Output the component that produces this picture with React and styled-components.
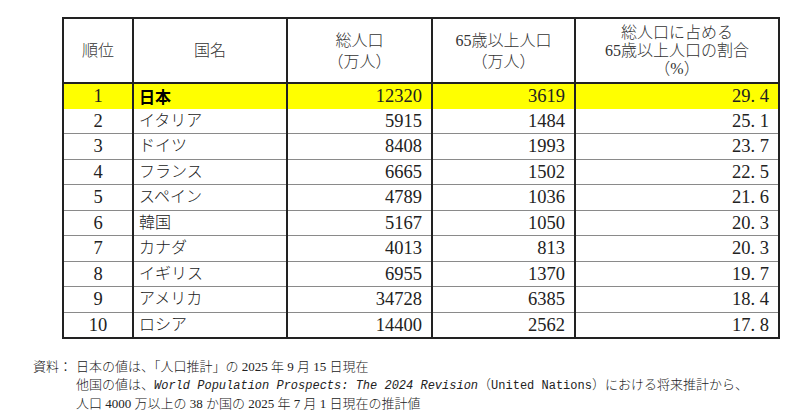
import styled, { createGlobalStyle } from 'styled-components';

const GlobalStyle = createGlobalStyle`
  html, body {
    margin: 0;
    padding: 0;
    background: #ffffff;
  }
  body {
    font-family: "Liberation Serif", "Noto Sans CJK JP", serif;
    color: #222;
  }
`;

const Page = styled.div`
  width: 800px;
  height: 420px;
  box-sizing: border-box;
  padding: 17px 0 0 62px;
  overflow: hidden;
`;

const Table = styled.table`
  border-collapse: collapse;
  table-layout: fixed;
  width: 716px;
  border: 2px solid #222;
`;

const HeadCell = styled.th`
  height: 63px;
  padding: 0;
  font-weight: 300;
  font-size: 16px;
  line-height: ${(p) => p.$lh || 21}px;
  color: #333;
  text-align: center;
  vertical-align: middle;
  border-left: 2px solid #222;
  border-bottom: 2px solid #222;
`;

const Row = styled.tr`
  background: ${(p) => (p.$hl ? '#ffff00' : '#ffffff')};
  & + & > td {
    border-top: 1px solid #8a8a8a;
  }
`;

const Cell = styled.td`
  height: 24.5px;
  padding: 0 ${(p) => (p.$align === 'right' ? '9px' : '0')} 0
    ${(p) => (p.$align === 'left' ? '5px' : '0')};
  border-left: 2px solid #222;
  text-align: ${(p) => p.$align || 'center'};
  vertical-align: middle;
  font-size: ${(p) => (p.$name ? '16px' : '18.5px')};
  font-weight: ${(p) => (p.$bold ? 700 : 300)};
  font-family: ${(p) =>
    p.$bold
      ? '"Noto Sans CJK JP", sans-serif'
      : '"Liberation Serif", "Noto Sans CJK JP", serif'};
  color: ${(p) => (p.$bold ? '#000' : '#222')};
  line-height: 1;
  white-space: nowrap;
`;

const Dot = styled.span`
  display: inline-block;
  width: 0.5em;
  text-align: left;
`;

const Notes = styled.div`
  display: flex;
  margin: 19px 0 0 -29px;
  font-size: 13px;
  line-height: 18px;
  font-weight: 300;
  color: #222;
`;

const NoteLabel = styled.div`
  flex: none;
  width: 43px;
`;

const NoteLines = styled.div`
  display: flex;
  flex-direction: column;
  white-space: nowrap;
`;

const Title = styled.span`
  font-family: "Liberation Mono", "Noto Sans CJK JP", monospace;
  font-style: italic;
  font-size: 12px;
`;

const Mono = styled.span`
  font-family: "Liberation Mono", "Noto Sans CJK JP", monospace;
  font-size: 12px;
`;

const rows = [
  [1, '日本', 12320, 3619, '29.4'],
  [2, 'イタリア', 5915, 1484, '25.1'],
  [3, 'ドイツ', 8408, 1993, '23.7'],
  [4, 'フランス', 6665, 1502, '22.5'],
  [5, 'スペイン', 4789, 1036, '21.6'],
  [6, '韓国', 5167, 1050, '20.3'],
  [7, 'カナダ', 4013, 813, '20.3'],
  [8, 'イギリス', 6955, 1370, '19.7'],
  [9, 'アメリカ', 34728, 6385, '18.4'],
  [10, 'ロシア', 14400, 2562, '17.8'],
];

const Ratio = ({ value }) => {
  const [a, b] = value.split('.');
  return (
    <>
      {a}
      <Dot>.</Dot>
      {b}
    </>
  );
};

const App = () => {
  return (
    <Page>
      <GlobalStyle />
      <Table>
        <colgroup>
          <col style={{ width: 70 }} />
          <col style={{ width: 154 }} />
          <col style={{ width: 145 }} />
          <col style={{ width: 143 }} />
          <col style={{ width: 204 }} />
        </colgroup>
        <thead>
          <tr>
            <HeadCell>順位</HeadCell>
            <HeadCell>国名</HeadCell>
            <HeadCell>
              総人口
              <br />
              （万人）
            </HeadCell>
            <HeadCell>
              65歳以上人口
              <br />
              （万人）
            </HeadCell>
            <HeadCell $lh={18}>
              総人口に占める
              <br />
              65歳以上人口の割合
              <br />
              （%）
            </HeadCell>
          </tr>
        </thead>
        <tbody>
          {rows.map(([rank, name, total, old, ratio]) => (
            <Row key={rank} $hl={rank === 1}>
              <Cell>{rank}</Cell>
              <Cell $align="left" $name $bold={rank === 1}>
                {name}
              </Cell>
              <Cell $align="right">{total}</Cell>
              <Cell $align="right">{old}</Cell>
              <Cell $align="right">
                <Ratio value={ratio} />
              </Cell>
            </Row>
          ))}
        </tbody>
      </Table>
      <Notes>
        <NoteLabel>資料：</NoteLabel>
        <NoteLines>
          <span>日本の値は、「人口推計」の 2025 年 9 月 15 日現在</span>
          <span>
            他国の値は、
            <Title>World Population Prospects: The 2024 Revision</Title>
            （<Mono>United Nations</Mono>）における将来推計から、
          </span>
          <span>人口 4000 万以上の 38 か国の 2025 年 7 月 1 日現在の推計値</span>
        </NoteLines>
      </Notes>
    </Page>
  );
};

export default App;
